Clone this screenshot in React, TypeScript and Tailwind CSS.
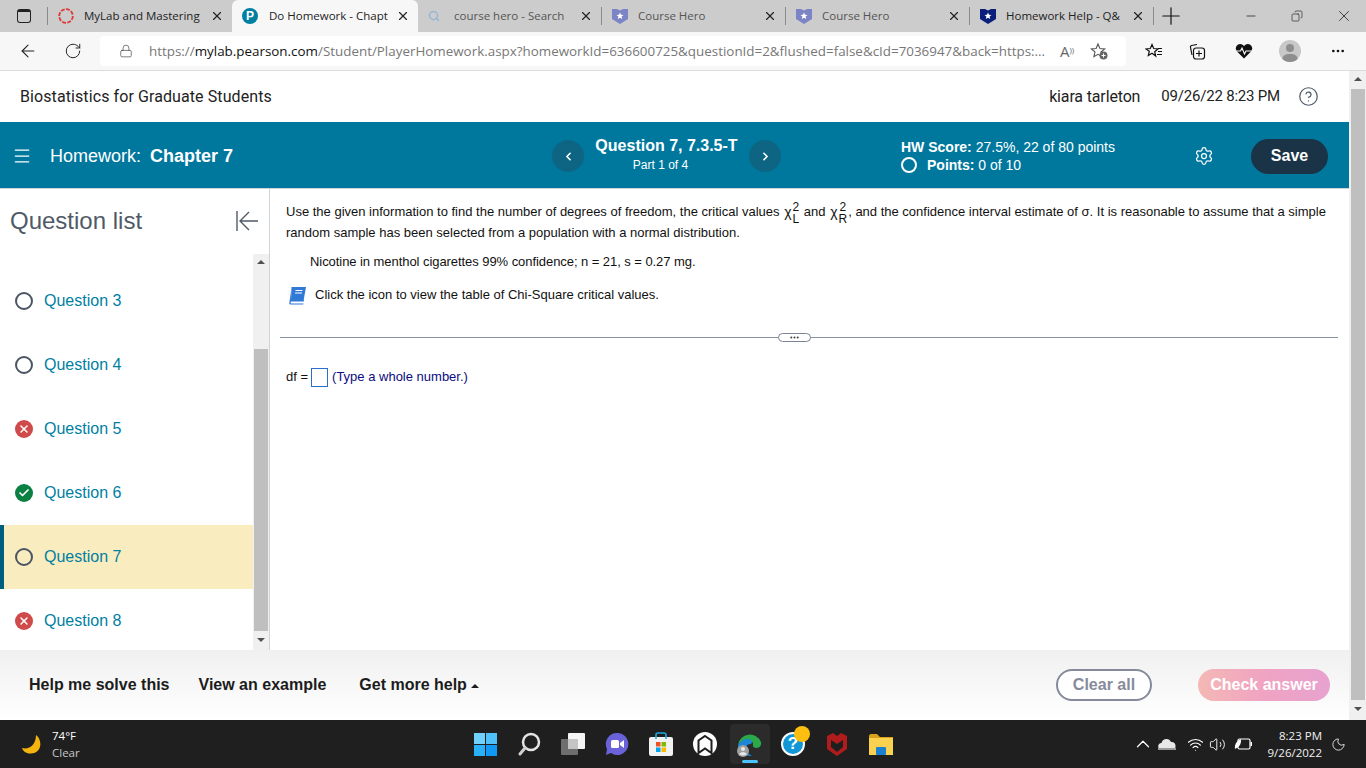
import { ArrowLeft, ChevronLeft, ChevronRight, ChevronUp, Copy, Ellipsis, HelpCircle, Lock, Menu, Minus, Plus, RotateCw, Settings, Volume2, Wifi, X, Check, Moon, Search } from 'lucide-react';

function Shield({ color }: { color: string }) {
  return (
    <svg width="16" height="16" viewBox="0 0 16 16">
      <path d="M0 1h5l3 1.500L11 1h5v10l-8 5-8-5z" fill={color} />
      <path d="M8 4.500l1 2.300 2.500.2-1.900 1.600.6 2.400L8 9.700l-2.200 1.300.6-2.400L4.500 7l2.500-.2z" fill="#fff" />
    </svg>
  );
}

function Tab({ icon, title, active, dim, w }: { icon: React.ReactNode; title: string; active?: boolean; dim?: boolean; w: string }) {
  return (
    <div className={`flex h-8 items-center pl-[10px] pr-[8px] ${w} ${active ? 'rounded-t-[6px] bg-[#f7f7f7]' : ''}`}>
      <span className={`flex shrink-0 items-center ${active ? 'w-[27px]' : 'w-[26px]'}`}>{icon}</span>
      <span className={`flex-1 overflow-hidden whitespace-nowrap text-[11.500px] ${dim ? 'text-[#555]' : 'text-[#222]'}`}>{title}</span>
      <X size={14} strokeWidth={2} className="ml-1 shrink-0 text-[#222]" />
    </div>
  );
}

function Sep() {
  return <div className="h-[18px] w-px shrink-0 bg-[#8a8a8a]" />;
}

function BrowserChrome() {
  return (
    <div className="shrink-0 font-['Open_Sans',sans-serif]">
      <div className="flex h-8 items-end bg-[#cccccc]">
        <div className="flex h-8 w-[47px] shrink-0 items-center justify-center">
          <div className="h-[14px] w-[14px] rounded-[3px] border-[1.500px] border-t-[3px] border-[#222]" />
        </div>
        <div className="flex h-8 items-center"><Sep /></div>
        <Tab
          w="w-[184px]"
          title="MyLab and Mastering"
          icon={
            <svg width="16" height="16" viewBox="0 0 16 16">
              <circle cx="8" cy="8" r="6.800" fill="none" stroke="#dc3a35" strokeWidth="1.800" strokeDasharray="4 1.300" />
            </svg>
          }
        />
        <Tab
          w="w-[186px]"
          active
          title="Do Homework - Chapt"
          icon={
            <span className="flex h-4 w-4 items-center justify-center rounded-full bg-[#007fa3] font-['Liberation_Sans',sans-serif] text-[12px] font-bold text-white">P</span>
          }
        />
        <Tab w="w-[183px]" dim title="course hero - Search" icon={<Search size={12} strokeWidth={2.500} className="text-[#8fb3d9]" />} />
        <div className="flex h-8 items-center"><Sep /></div>
        <Tab w="w-[183px]" dim title="Course Hero" icon={<Shield color="#7b84c4" />} />
        <div className="flex h-8 items-center"><Sep /></div>
        <Tab w="w-[183px]" dim title="Course Hero" icon={<Shield color="#7b84c4" />} />
        <div className="flex h-8 items-center"><Sep /></div>
        <Tab w="w-[183px]" title="Homework Help - Q&amp;" icon={<Shield color="#0a1f7a" />} />
        <div className="flex h-8 items-center"><Sep /></div>
        <div className="flex h-8 w-[33px] items-center justify-center">
          <Plus size={28} strokeWidth={1} className="text-[#111]" />
        </div>
        <div className="ml-auto flex h-8 items-center text-[#222]">
          <div className="flex w-[46px] justify-center"><Minus size={14} strokeWidth={1.300} /></div>
          <div className="flex w-[46px] justify-center"><Copy size={12} strokeWidth={1.300} className="-scale-x-100" /></div>
          <div className="ml-[2px] flex w-[44px] justify-center"><X size={18} strokeWidth={1.100} /></div>
        </div>
      </div>
      <div className="flex h-[39px] items-center border-b border-[#dcdcdc] bg-[#f7f7f7]">
        <div className="flex w-[100px] shrink-0 items-center">
          <ArrowLeft size={20} strokeWidth={1.300} className="ml-[18px] text-[#222]" />
          <RotateCw size={18} strokeWidth={1.300} className="ml-[26px] text-[#222]" />
        </div>
        <div className="flex h-[30px] w-[1026px] shrink-0 items-center rounded-[4px] bg-white">
          <Lock size={14} strokeWidth={1.300} className="ml-[19px] text-[#555]" />
          <div className="ml-[16px] w-[900px] overflow-hidden whitespace-nowrap text-[13.400px] text-[#777]">
            https://<span className="text-[#111]">mylab.pearson.com</span>/Student/PlayerHomework.aspx?homeworkId=636600725&amp;questionId=2&amp;flushed=false&amp;cId=7036947&amp;back=https:...
          </div>
          <span className="ml-[11px] text-[15px] text-[#666]">A<sup className="text-[8px]">))</sup></span>
          <svg width="18" height="18" viewBox="0 0 18 18" className="ml-[16px]">
            <path d="M8 2l1.900 4.500 4.800.4-3.700 3.100 1.100 4.700L8 12.300l-4.100 2.400L5 10 1.300 6.900l4.800-.4z" fill="none" stroke="#555" strokeWidth="1.100" />
            <circle cx="13.500" cy="13.500" r="4" fill="#666" />
            <path d="M13.500 11.500v4M11.500 13.500h4" stroke="#fff" strokeWidth="1" />
          </svg>
        </div>
        <div className="flex flex-1 items-center text-[#111]">
          <svg width="18" height="16" viewBox="0 0 18 16" className="ml-[19px]">
            <path d="M7 1.500l1.700 4 4.300.4-3.300 2.800 1 4.300L7 10.300 3.300 12.500l1-4.300L1 5.900l4.300-.4z" fill="none" stroke="#111" strokeWidth="1.200" />
            <path d="M13 5.500h4M13 8.500h4M12 11.500h5" stroke="#111" strokeWidth="1.200" />
          </svg>
          <svg width="18" height="18" viewBox="0 0 18 18" className="ml-[25px]">
            <rect x="5.500" y="6" width="11" height="11" rx="2.500" fill="none" stroke="#111" strokeWidth="1.200" />
            <path d="M11 8.500v6M8 11.500h6" stroke="#111" strokeWidth="1.200" />
            <path d="M9 2.500L3.500 3.500Q2 4 2.500 5.500L4 13" fill="none" stroke="#111" strokeWidth="1.200" />
          </svg>
          <svg width="18" height="16" viewBox="0 0 18 16" className="ml-[29px]">
            <path d="M9 15.500L1.500 8Q-.5 4 3 1.500 6.500 0 9 3q2.500-3 6-1.500Q18.500 4 16.500 8z" fill="#111" />
            <path d="M1 8h4.500l1.500-3 2.500 6 1.500-3H17" fill="none" stroke="#fff" strokeWidth="1.100" />
          </svg>
          <div className="relative ml-[26px] h-[22px] w-[22px] overflow-hidden rounded-full bg-[#c8c8c8]">
            <div className="absolute left-[7px] top-[4px] h-2 w-2 rounded-full bg-[#8e8e8e]" />
            <div className="absolute left-[3px] top-[14px] h-[12px] w-4 rounded-full bg-[#8e8e8e]" />
          </div>
          <Ellipsis size={16} className="ml-[29px]" />
        </div>
      </div>
    </div>
  );
}

function Status({ kind }: { kind: 'open' | 'wrong' | 'right' }) {
  if (kind === 'open') {
    return <span className="block h-[18px] w-[18px] rounded-full border-2 border-[#4a5463]" />;
  }
  return (
    <span className={`flex h-[18px] w-[18px] items-center justify-center rounded-full ${kind === 'wrong' ? 'bg-[#cf4a4a]' : 'bg-[#0b8043]'}`}>
      {kind === 'wrong' ? <X size={12} strokeWidth={3} className="text-white" /> : <Check size={12} strokeWidth={3.500} className="text-white" />}
    </span>
  );
}

const questions: { label: string; kind: 'open' | 'wrong' | 'right'; current?: boolean }[] = [
  { label: 'Question 3', kind: 'open' },
  { label: 'Question 4', kind: 'open' },
  { label: 'Question 5', kind: 'wrong' },
  { label: 'Question 6', kind: 'right' },
  { label: 'Question 7', kind: 'open', current: true },
  { label: 'Question 8', kind: 'wrong' },
];

function Sidebar() {
  return (
    <aside className="flex w-[270px] shrink-0 flex-col border-r border-[#cfd3da]">
      <div className="flex h-[65px] shrink-0 items-start justify-between pl-[10px] pr-[10px] pt-[17px]">
        <h2 className="text-[24px] leading-[30px] text-[#505a66]">Question list</h2>
        <svg width="24" height="24" viewBox="0 0 24 24" className="mt-[3px]">
          <path d="M2 2v20M23 12H6M14 3l-9 9 9 9" fill="none" stroke="#505a66" strokeWidth="1.400" />
        </svg>
      </div>
      <div className="flex min-h-0 flex-1">
        <ul className="w-[253px] pt-[15px]">
          {questions.map(q => (
            <li
              key={q.label}
              className={`flex h-16 items-center border-l-4 pl-[11px] ${q.current ? 'border-[#005f7f] bg-[#f9ecbe]' : 'border-transparent'}`}
            >
              <Status kind={q.kind} />
              <span className="ml-[11px] text-[16px] text-[#007fa3]">{q.label}</span>
            </li>
          ))}
        </ul>
        <div className="flex w-4 flex-col items-center bg-[#f0f0f0]">
          <div className="mt-[6px] h-0 w-0 border-x-[4px] border-b-[4px] border-x-transparent border-b-[#505050]" />
          <div className="mt-[85px] h-[282px] w-[14px] bg-[#bfbfbf]" />
          <div className="mt-[7px] h-0 w-0 border-x-[4px] border-t-[4px] border-x-transparent border-t-[#505050]" />
        </div>
      </div>
    </aside>
  );
}

function Chi({ sub }: { sub: string }) {
  return (
    <span className="-my-1 mx-[1px] inline-flex items-center align-middle">
      <span className="text-[14px]">χ</span>
      <span className="ml-[1px] flex flex-col items-center text-[12px] leading-[12px]">
        <span>2</span>
        <span>{sub}</span>
      </span>
    </span>
  );
}

function Question() {
  return (
    <main className="min-w-0 flex-1 text-[13px] text-[#111]">
      <div className="pl-4 pr-[10px] pt-[12px] leading-[21px]">
        <p>
          Use the given information to find the number of degrees of freedom, the critical values <Chi sub="L" /> and <Chi sub="R" />, and the confidence interval estimate of σ. It is reasonable to assume that a simple random sample has been selected from a population with a normal distribution.
        </p>
      </div>
      <p className="ml-10 mt-[9px] leading-[20px] tracking-[-0.060px]">Nicotine in menthol cigarettes 99% confidence; n = 21, s = 0.27 mg.</p>
      <div className="ml-[18px] mt-[13px] flex h-5 items-center">
        <svg width="19" height="19" viewBox="0 0 19 19">
          <path d="M3.500 1h14.500l-2.500 14H3z" fill="#3079d6" />
          <path d="M1.500 15.500L3.500 2.500 3 14h13l-.4 1.500H3.500q-1 .1-1 1t1 1h12l-.3 1H2.500Q.8 18.500 1.500 15.500z" fill="#3079d6" />
          <path d="M7.500 4.500h7M7 7h7" stroke="#fff" strokeWidth="1.200" />
        </svg>
        <span className="ml-[8px]">Click the icon to view the table of Chi-Square critical values.</span>
      </div>
      <div className="relative ml-[10px] mr-[11px] mt-[32px] h-px bg-[#8a93a3]">
        <div className="absolute left-[498px] top-[-4px] flex h-[9px] w-[33px] items-center justify-center rounded-full border border-[#7a8494] bg-white text-[#444]">
          <Ellipsis size={11} strokeWidth={2.500} />
        </div>
      </div>
      <div className="ml-4 mt-[29px] flex h-5 items-center">
        <span>df =</span>
        <span className="ml-[3px] block h-[19px] w-[17px] border border-[#2a6fc9] bg-white" />
        <span className="ml-[4px] text-[#0b0b80]">(Type a whole number.)</span>
      </div>
    </main>
  );
}

function HeaderBars() {
  return (
    <>
      <div className="flex h-[51px] shrink-0 items-center pl-5 pr-[30px] font-['Roboto',sans-serif] text-[16px] text-[#222]">
        <span className="tracking-[0.090px]">Biostatistics for Graduate Students</span>
        <span className="ml-auto tracking-[-0.150px]">kiara tarleton</span>
        <span className="ml-[21px] text-[15px] tracking-[-0.200px]">09/26/22 8:23 PM</span>
        <HelpCircle size={21} strokeWidth={1.400} className="ml-[18px] text-[#505a66]" />
      </div>
      <div className="flex h-[67px] shrink-0 items-center border-b border-[#cfd3da] bg-[#00789e] pt-[2px] text-white">
        <Menu size={20} strokeWidth={1.500} className="ml-[12px]" />
        <div className="ml-[18px] w-[502px] text-[18px]">
          Homework: <span className="ml-1 font-bold">Chapter 7</span>
        </div>
        <div className="flex h-8 w-8 items-center justify-center rounded-full bg-[#0e6583]">
          <ChevronLeft size={13} strokeWidth={3} />
        </div>
        <div className="-mt-[2px] w-[165px] text-center">
          <div className="text-[16px] font-bold leading-[20px]">Question 7, 7.3.5-T</div>
          <div className="pr-[12px] text-[12px] leading-[18px]">Part 1 of 4</div>
        </div>
        <div className="flex h-8 w-8 items-center justify-center rounded-full bg-[#0e6583]">
          <ChevronRight size={13} strokeWidth={3} />
        </div>
        <div className="ml-[120px] w-[280px] text-[14px] leading-[18px]">
          <div><b>HW Score:</b> 27.5%, 22 of 80 points</div>
          <div className="flex items-center">
            <span className="block h-4 w-4 rounded-full border-2 border-white" />
            <span className="ml-[10px]"><b>Points:</b> 0 of 10</span>
          </div>
        </div>
        <Settings size={20} strokeWidth={1.500} className="ml-[13px]" />
        <div className="ml-[37px] flex h-[35px] w-[77px] items-center justify-center rounded-full bg-[#1a3347] text-[16px] font-bold">Save</div>
      </div>
    </>
  );
}

function Footer() {
  return (
    <div className="flex h-[70px] shrink-0 items-center bg-gradient-to-b from-[#f0f0f0] to-white pl-[29px] pr-[19px] text-[16px] font-bold text-[#1c1c1c]">
      <span>Help me solve this</span>
      <span className="ml-[29px]">View an example</span>
      <span className="ml-[33px]">Get more help</span>
      <span className="ml-[4px] mt-[2px] h-0 w-0 border-x-[4px] border-b-[4px] border-x-transparent border-b-[#1c1c1c]" />
      <div className="ml-auto flex h-8 w-[96px] items-center justify-center rounded-full border-2 border-[#868b9c] bg-white text-[#868b9c]">Clear all</div>
      <div className="ml-[46px] flex h-8 w-[132px] items-center justify-center rounded-full bg-gradient-to-r from-[#f4b8b4] via-[#f0a3c2] to-[#e7a2cf] text-white">Check answer</div>
    </div>
  );
}

function TaskIcon({ children, active }: { children: React.ReactNode; active?: boolean }) {
  return (
    <div className={`relative flex h-10 w-11 items-center justify-center ${active ? 'rounded-[4px]' : ''}`}>
      {active && <div className="absolute inset-y-0 left-[3px] right-[1px] rounded-[4px] bg-[#2b2b2b]" />}
      <div className="relative">{children}</div>
      {active && <div className="absolute bottom-[1px] left-[15px] h-[3px] w-4 rounded-full bg-[#4cc2ff]" />}
    </div>
  );
}

function Taskbar() {
  return (
    <div className="relative flex h-12 shrink-0 items-center bg-[#1f1f1f] font-['Open_Sans',sans-serif] text-white">
      <div className="flex w-[463px] shrink-0 items-center pl-[22px]">
        <svg width="20" height="20" viewBox="0 0 20 20">
          <path d="M14 1C21 6 20 20 8 19.500 4 19.500 1 17 0 14 7 16 14 11 14 1z" fill="#f5b50e" />
        </svg>
        <div className="ml-[10px] text-[11.500px] leading-[17px]">
          <div>74°F</div>
          <div className="text-[#c8c8c8]">Clear</div>
        </div>
      </div>
      <div className="flex items-center">
        <TaskIcon>
          <div className="grid h-[23px] w-[23px] grid-cols-2 gap-[1px]">
            <span className="bg-[#6fd0fb]" /><span className="bg-[#4fc0fa]" /><span className="bg-[#29b0fb]" /><span className="bg-[#1098f7]" />
          </div>
        </TaskIcon>
        <TaskIcon>
          <svg width="24" height="24" viewBox="0 0 24 24"><circle cx="14" cy="10" r="8" fill="none" stroke="#e4e4e4" strokeWidth="2.500" /><path d="M8 16l-5 6" stroke="#d0d0d0" strokeWidth="3" strokeLinecap="round" /></svg>
        </TaskIcon>
        <TaskIcon>
          <svg width="24" height="22" viewBox="0 0 24 22">
            <rect x="7" y="0" width="17" height="16" rx="1" fill="#f4f4f4" />
            <rect x="0" y="6" width="17" height="16" rx="1" fill="#6e6e6e" />
            <rect x="7" y="6" width="10" height="10" fill="#c4c4c4" />
          </svg>
        </TaskIcon>
        <TaskIcon>
          <svg width="24" height="24" viewBox="0 0 24 24">
            <path d="M12 1a11 11 0 1 1-6 20L1 23l1-6A11 11 0 0 1 12 1z" fill="#6a62d8" />
            <rect x="6" y="8" width="8" height="8" rx="1.500" fill="#fff" />
            <path d="M15 11l4-3v8l-4-3z" fill="#fff" />
          </svg>
        </TaskIcon>
        <TaskIcon>
          <svg width="24" height="24" viewBox="0 0 24 24">
            <rect x="0" y="5" width="24" height="19" rx="2" fill="#f2f2f2" />
            <path d="M7 7V3q0-2 2-2h6q2 0 2 2v4" fill="none" stroke="#1fa8e0" strokeWidth="1.600" />
            <rect x="7" y="10" width="4.500" height="4.500" fill="#f25022" />
            <rect x="12.500" y="10" width="4.500" height="4.500" fill="#7fba00" />
            <rect x="7" y="15.500" width="4.500" height="4.500" fill="#00a4ef" />
            <rect x="12.500" y="15.500" width="4.500" height="4.500" fill="#ffb900" />
          </svg>
        </TaskIcon>
        <TaskIcon>
          <svg width="24" height="24" viewBox="0 0 24 24">
            <circle cx="12" cy="12" r="12" fill="#fff" />
            <path d="M12 4l6.500 4.500V21L12 16.500 5.500 21V8.500z" fill="none" stroke="#1f1f1f" strokeWidth="2" />
          </svg>
        </TaskIcon>
        <TaskIcon active>
          <svg width="25" height="25" viewBox="0 0 25 25">
            <path d="M1 13A12 12 0 0 1 24 10q1 5-4 6-5 0-4-4 0-3-4-4Q5 8 1 13z" fill="#2ba84a" />
            <path d="M1 13Q5 6 12 7q5 2 2 5-4 0-5 3 0 6 6 9Q1 24 1 13z" fill="#1b87d6" />
            <circle cx="6" cy="19" r="6" fill="#a0a0a0" />
            <circle cx="6" cy="17" r="2" fill="#e8e8e8" />
            <path d="M2 22q4-4 8 0-4 3-8 0z" fill="#e8e8e8" />
          </svg>
        </TaskIcon>
        <TaskIcon>
          <div className="relative flex h-6 w-6 items-center justify-center rounded-full border-2 border-white bg-[#1297d6] font-['Liberation_Sans',sans-serif] text-[17px] font-bold">?</div>
          <div className="absolute -right-[5px] -top-[6px] h-4 w-4 rounded-full bg-[#fdbf0f]" />
        </TaskIcon>
        <TaskIcon>
          <svg width="20" height="23" viewBox="0 0 20 23">
            <path d="M0 3l6-3 4 3 4-3 6 3v13l-10 7-10-7z" fill="#b01c1c" />
            <path d="M4 7l6 4 6-4v7l-6 5-6-5z" fill="#1f1f1f" />
          </svg>
        </TaskIcon>
        <TaskIcon>
          <svg width="24" height="21" viewBox="0 0 24 21">
            <path d="M0 2q0-2 2-2h6l3 3h13v18H0z" fill="#d9a21b" />
            <rect x="0" y="4" width="24" height="17" fill="#fbd24f" />
            <rect x="7" y="13" width="10" height="8" rx="1" fill="#1c80d0" />
          </svg>
        </TaskIcon>
      </div>
      <div className="ml-auto flex items-center pr-[20px]">
        <ChevronUp size={22} strokeWidth={1.300} />
        <svg width="18" height="12" viewBox="0 0 18 12" className="ml-[4px]">
          <path d="M4 12a3.500 3.500 0 0 1-.5-7A5 5 0 0 1 13 4a4 4 0 0 1 1 8z" fill="#e8e8e8" />
          <path d="M0 10h18v2H0z" fill="#9a9a9a" />
        </svg>
        <Wifi size={17} strokeWidth={1.500} className="ml-[11px]" />
        <Volume2 size={17} strokeWidth={1.300} className="ml-[5px]" />
        <svg width="18" height="12" viewBox="0 0 18 12" className="ml-[8px]">
          <rect x="4" y="1" width="12" height="10" rx="1.500" fill="none" stroke="#fff" strokeWidth="1.200" />
          <rect x="16.500" y="4" width="1.500" height="4" fill="#fff" />
          <path d="M1 11Q0 4 7 1q1 7-6 10z" fill="#fff" />
        </svg>
        <div className="ml-[9px] w-[61px] text-right text-[11.500px] leading-[17px] text-[#f0f0f0]">
          <div>8:23 PM</div>
          <div>9/26/2022</div>
        </div>
        <Moon size={15} strokeWidth={1.300} className="ml-[9px]" />
      </div>
    </div>
  );
}

export default function App() {
  return (
    <div className="flex h-[768px] w-[1366px] flex-col overflow-hidden bg-white font-['Liberation_Sans',Arial,sans-serif]">
      <BrowserChrome />
      <div className="flex min-h-0 flex-1">
        <div className="flex min-w-0 flex-1 flex-col">
          <HeaderBars />
          <div className="flex min-h-0 flex-1">
            <Sidebar />
            <Question />
          </div>
          <Footer />
        </div>
        <div className="flex w-[17px] shrink-0 flex-col items-center bg-[#f0f0f0]">
          <div className="mt-[6px] h-0 w-0 border-x-[4px] border-b-[4px] border-x-transparent border-b-[#505050]" />
          <div className="mt-[8px] h-[611px] w-[14px] bg-[#bfbfbf]" />
          <div className="mt-[7px] h-0 w-0 border-x-[4px] border-t-[4px] border-x-transparent border-t-[#505050]" />
        </div>
      </div>
      <Taskbar />
    </div>
  );
}
